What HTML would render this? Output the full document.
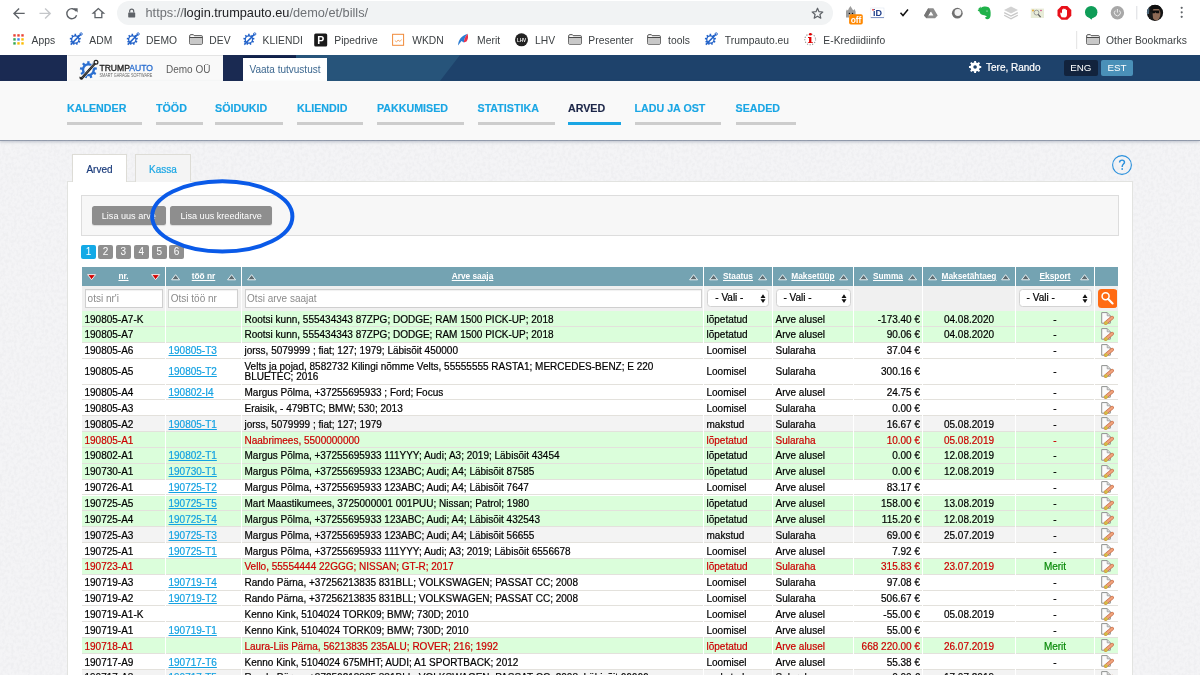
<!DOCTYPE html>
<html><head><meta charset="utf-8">
<style>
*{box-sizing:border-box;margin:0;padding:0}
html,body{width:1200px;height:675px;overflow:hidden}
body{font-family:"Liberation Sans",sans-serif;background:#f4f4f6;position:relative;color:#000}
.abs{position:absolute}
#root{position:absolute;left:0;top:0;width:1200px;height:675px;will-change:transform}
.c,.sel,.tab,#tere{-webkit-text-stroke:0.2px currentColor}
.ni{-webkit-text-stroke:0.15px currentColor}
/* browser chrome */
#chrome{position:absolute;left:0;top:0;width:1200px;height:55px;background:#fff}
#url{position:absolute;left:117px;top:1px;width:716px;height:23.5px;border-radius:12px;background:#f1f3f4}
#url .t{position:absolute;left:28.5px;top:3.6px;font-size:12.75px;color:#6e7175;white-space:nowrap}
#url .t b{font-weight:normal;color:#202124}
.bm{position:absolute;top:34.6px;font-size:10.3px;letter-spacing:0.05px;color:#3c4043;white-space:nowrap}
/* app header */
#hdr{position:absolute;left:0;top:55px;width:1200px;height:26px;background:#1e426b}
#navy1{position:absolute;left:0;top:0;width:67px;height:26px;background:#1a2a52}
#logoarea{position:absolute;left:67px;top:0;width:156px;height:26px;background:#f9f9f9;border-top:1px solid #e4e4e4;border-left:1px solid #fff}
#navy2{position:absolute;left:223px;top:0;width:73px;height:26px;background:#1a2a52}
#vaata{position:absolute;left:243px;top:3px;width:84px;height:23px;background:#fff;font-size:10px;color:#3d6890;padding:6px 0 0 6.5px;white-space:nowrap}
#demo{position:absolute;left:166px;top:9.2px;font-size:10px;color:#5c5c5c;white-space:nowrap}
#tere{position:absolute;left:986px;top:6.7px;font-size:10px;color:#fff;white-space:nowrap}
#eng{position:absolute;left:1063.5px;top:4.8px;width:34.5px;height:16.2px;background:#12233d;border-radius:2px;color:#fff;font-size:9.8px;text-align:center;line-height:15px}
#est{position:absolute;left:1101px;top:4.8px;width:32px;height:16.2px;background:#4a90b8;border-radius:2px;color:#fff;font-size:9.8px;text-align:center;line-height:15px}
/* nav */
#nav{position:absolute;left:0;top:81px;width:1200px;height:59px;background:#f9f9f9;box-shadow:0 1px 0 #9099aa,0 2px 3px rgba(120,130,150,.45)}
.ni{position:absolute;top:21px;font-size:10.7px;font-weight:bold;color:#1aa6e4;white-space:nowrap;padding-bottom:8px;border-bottom:3px solid #cdcdcd;padding-right:16px}
.ni.act{color:#1c2648;border-bottom-color:#1aa6e4}
/* tabs + panel */
#panel{position:absolute;left:67px;top:181px;width:1066px;height:520px;background:#fff;border:1px solid #e2e3e0}
.tab{position:absolute;top:154px;height:28px;border:1px solid #dddcd6;border-bottom:none;font-size:10px;text-align:center;padding-top:9px}
#tab1{left:72px;width:55px;background:#fff;color:#1b3c7c;height:28px}
#tab2{left:135px;width:56px;background:#f4f4f4;color:#1aa6e4}
#tb{position:absolute;left:81px;top:195px;width:1038px;height:41px;background:#f7f7f7;border:1px solid #dddddd}
.btn{position:absolute;top:206px;height:19px;background:#8e8e8e;border-radius:2.5px;color:#fff;font-size:9.1px;text-align:center;line-height:21.6px;white-space:nowrap;box-shadow:0 1px 1px rgba(0,0,0,.12)}
.pg{position:absolute;top:244.8px;width:14.6px;height:14px;border-radius:2px;background:#8f8f8f;color:#fff;font-size:10px;text-align:center;line-height:14px}
/* table */
#tbl{position:absolute;left:82px;top:267px;width:1036px;height:420px}
.hd{position:absolute;top:0;height:19px;background:#74a3b2}
.hd span{position:absolute;top:4px;left:0;right:0;text-align:center;font-size:8.3px;font-weight:bold;color:#fff;text-decoration:underline}
.tri{position:absolute;top:6.6px}
.fr{position:absolute;top:19px;height:24.6px;background:#f0f0f0}
.inp{position:absolute;top:3px;height:19px;background:#fff;border:1px solid #cfcfcf;font-size:10px;color:#8a8a8a;padding:3px 0 0 1.6px;white-space:nowrap;box-shadow:inset 0 1px 1px rgba(0,0,0,.06)}
.sel{position:absolute;top:3px;height:18.4px;background:#fff;border:1px solid #d3d3d3;border-radius:3.5px;font-size:10px;color:#000;padding:1.8px 0 0 7px;white-space:nowrap}
.row{position:absolute;left:0;width:1036px}
.c{position:absolute;top:0;bottom:0;background:var(--bg);border-bottom:1px solid #e3e1dc;font-size:10px;line-height:10px;padding:0 0 0 2.5px;white-space:nowrap;overflow:hidden;display:flex;align-items:center}
.c>*{position:relative;top:1.1px}
.c.r{justify-content:flex-end;padding-right:2px}
.c.ctr{justify-content:center;padding-left:0}
.row.red .c{color:#cc0000}
.row .c.merit{color:#0a8a0a}
.c a{color:#14a2e2;text-decoration:underline}
.edit{position:relative;left:-2.5px}
.c.ed>svg{top:-0.3px}
</style></head><body>
<div id="root">

<div id="chrome">
  <div id="url"><div class="t">https://<b>login.trumpauto.eu</b>/demo/et/bills/</div></div>
  <div class="bm" style="left:31.5px">Apps</div>
  <div class="bm" style="left:89.3px">ADM</div>
  <div class="bm" style="left:146px">DEMO</div>
  <div class="bm" style="left:209.3px">DEV</div>
  <div class="bm" style="left:262.5px">KLIENDI</div>
  <div class="bm" style="left:334.3px">Pipedrive</div>
  <div class="bm" style="left:412.2px">WKDN</div>
  <div class="bm" style="left:477px">Merit</div>
  <div class="bm" style="left:535px">LHV</div>
  <div class="bm" style="left:588.3px">Presenter</div>
  <div class="bm" style="left:668px">tools</div>
  <div class="bm" style="left:724.8px">Trumpauto.eu</div>
  <div class="bm" style="left:823.3px">E-Krediidiinfo</div>
  <div class="bm" style="left:1106px">Other Bookmarks</div>
<svg class="abs" style="left:0;top:0" width="1200" height="55" viewBox="0 0 1200 55">
  <!-- back -->
  <g fill="none" stroke="#5f6368" stroke-width="1.4" stroke-linecap="square">
    <path d="M24 13.4H14.2M18.6 8.9L14 13.4L18.6 17.9"/>
  </g>
  <g fill="none" stroke="#c4c6c9" stroke-width="1.4" stroke-linecap="square">
    <path d="M40.2 13.4H50M45.6 8.9L50.2 13.4L45.6 17.9"/>
  </g>
  <!-- reload -->
  <g fill="none" stroke="#5f6368" stroke-width="1.4">
    <path d="M76.2 11.2A5 5 0 1 0 76.6 15.2"/>
  </g>
  <path d="M73.2 8.3L77.6 8.3L77.6 12.6Z" fill="#5f6368"/>
  <!-- home -->
  <path d="M98.4 8.6L93.2 13.2H95V17.6H101.8V13.2H103.6Z" fill="none" stroke="#5f6368" stroke-width="1.3" stroke-linejoin="miter"/>
  <!-- lock -->
  <rect x="128.2" y="12.4" width="7" height="5" rx="0.6" fill="#5f6368"/>
  <path d="M129.7 12.6V11.2A2 2 0 0 1 133.7 11.2V12.6" fill="none" stroke="#5f6368" stroke-width="1.2"/>
  <!-- star -->
  <path d="M817.5 8.2L819 11.7L822.8 12L819.9 14.5L820.8 18.2L817.5 16.2L814.2 18.2L815.1 14.5L812.2 12L816 11.7Z" fill="none" stroke="#5f6368" stroke-width="1.2" stroke-linejoin="round"/>
  <!-- off ext -->
  <path d="M846 17.6V11.6L846.8 9.4L847.9 10.4L848.8 8.6L850.4 5.9L852 8.6L853.2 10.4L854.6 9L855.6 11.8V15H849V17.6Z" fill="#9d9d9d"/>
  <circle cx="849.4" cy="13.4" r="0.7" fill="#111"/><circle cx="852.5" cy="13.4" r="0.7" fill="#111"/>
  <rect x="849.1" y="14.3" width="13.7" height="10.3" rx="1.8" fill="#ff8800"/>
  <text x="856" y="22.6" font-size="8.4" font-family="Liberation Sans" font-weight="bold" fill="#fff" text-anchor="middle">off</text>
  <!-- iD -->
  <rect x="870.8" y="8" width="13.2" height="9.5" fill="#fff" stroke="#dfe6f0" stroke-width="0.6"/>
  <text x="877.4" y="16.2" font-size="9" font-family="Liberation Sans" font-weight="bold" fill="#1e3d8a" text-anchor="middle">iD</text>
  <rect x="872.3" y="9" width="1.4" height="1.6" fill="#e02020"/>
  <line x1="870.8" y1="17.6" x2="884" y2="17.6" stroke="#2d4d9a" stroke-width="0.6"/>
  <!-- check -->
  <path d="M900.5 12.8L903 15.6L908 9.6" fill="none" stroke="#111" stroke-width="1.5"/>
  <!-- drive -->
  <path d="M928.2 8.2H933.4L937.7 15.6L935.1 18.3H926.5L924 15.6Z" fill="#8d8d8d"/>
  <path d="M930.8 11.2L933.4 15.6H928.2Z" fill="#fff"/>
  <path d="M928.2 8.2L924 15.6L926.5 18.3L930.8 11.2Z" fill="#767676"/>
  <!-- circle -->
  <circle cx="957.3" cy="13.2" r="5.4" fill="#6f6f6f"/>
  <circle cx="957.9" cy="12.5" r="3.4" fill="#f2f2f2"/>
  <!-- evernote -->
  <path d="M981.5 7.6C983 6.4 986.5 6.3 988.6 7.3C990.4 8.6 990.9 12 990.6 15.2C990.4 17.8 989.2 19.2 987.2 19.2C985.6 19.2 985 18.2 985.3 17.3C985.6 16.6 986.6 16.6 987.2 17C986.6 15.8 984.8 15.4 983 15C980.8 14.4 979.8 13 979.4 11.4L977.6 10.8L979.6 8.8Z" fill="#20b24a"/>
  <path d="M977.7 9.4L980.6 9.3L980.8 6.6Z" fill="#20b24a"/>
  <circle cx="987" cy="11" r="0.6" fill="#fff"/>
  <!-- layers -->
  <path d="M1011 6.5L1018 10L1011 13.5L1004 10Z" fill="#d2d2d2"/>
  <path d="M1004.2 12.6L1011 16L1017.8 12.6M1004.2 15.2L1011 18.8L1017.8 15.2" fill="none" stroke="#c8c8c8" stroke-width="1.3"/>
  <!-- map -->
  <rect x="1030.8" y="8.6" width="13.2" height="9.4" fill="#e8ecd8"/>
  <circle cx="1036.5" cy="12.6" r="2.4" fill="none" stroke="#999" stroke-width="0.9"/>
  <path d="M1038.2 14.4L1040.6 17.2" stroke="#555" stroke-width="1.2"/>
  <circle cx="1033" cy="10.5" r="0.9" fill="#e6a020"/>
  <circle cx="1041" cy="10.5" r="0.8" fill="#d04080"/>
  <!-- red hand -->
  <path d="M1061.5 6H1067.3L1071.3 10V15.7L1067.3 19.7H1061.5L1057.5 15.7V10Z" fill="#e8101a"/>
  <path d="M1061.6 17.2C1060.5 15.5 1060 13.5 1060.5 12.8C1061 12.3 1061.5 12.8 1062 13.6V9.8C1062 9 1063.2 9 1063.2 9.8V12V9C1063.2 8.2 1064.5 8.2 1064.5 9V12V9.3C1064.5 8.5 1065.8 8.5 1065.8 9.3V12.2V10.2C1065.8 9.5 1067 9.5 1067 10.2V14.5C1067 16.5 1066 17.5 1065 17.5Z" fill="#fff"/>
  <!-- green chat -->
  <circle cx="1091.2" cy="12.2" r="6.2" fill="#0f9d58"/>
  <path d="M1089 17.5L1091.5 19.8L1092.5 17.5Z" fill="#0f9d58"/>
  <!-- power -->
  <circle cx="1117.4" cy="12.8" r="6.7" fill="#a8a8a8"/>
  <path d="M1115.3 10.6A3 3 0 1 0 1119.5 10.6" fill="none" stroke="#eee" stroke-width="1"/>
  <line x1="1117.4" y1="9" x2="1117.4" y2="12.6" stroke="#eee" stroke-width="1"/>
  <!-- separator -->
  <line x1="1136.8" y1="6" x2="1136.8" y2="19.5" stroke="#dadce0" stroke-width="1"/>
  <!-- avatar -->
  <clipPath id="avc"><circle cx="1155" cy="12.8" r="8.1"/></clipPath>
  <g clip-path="url(#avc)">
    <rect x="1146" y="4" width="18" height="18" fill="#141414"/>
    <rect x="1146" y="6" width="3.2" height="8" fill="#4a6478"/>
    <ellipse cx="1156.2" cy="14" rx="4.2" ry="6.4" fill="#8e6a55"/>
    <path d="M1151.5 10.6H1159.2V13.2H1156.5L1155.6 12.2L1154.6 13.2H1151.5Z" fill="#0c0c0c"/>
    <path d="M1149 12L1152.6 11.4L1152.8 20L1149 19Z" fill="#1a1a1a"/>
    <path d="M1151 5.6C1153 4.6 1157.5 4.6 1160 6.4L1159.6 9H1151.6Z" fill="#101010"/>
  </g>
  <!-- dots -->
  <circle cx="1181.7" cy="7.8" r="1.1" fill="#5f6368"/>
  <circle cx="1181.7" cy="12.3" r="1.1" fill="#5f6368"/>
  <circle cx="1181.7" cy="16.8" r="1.1" fill="#5f6368"/>

  <!-- bookmarks icons -->
  <g>
    <rect x="13.3" y="34.2" width="2.4" height="2.4" fill="#ea4335"/><rect x="17.3" y="34.2" width="2.4" height="2.4" fill="#ea4335"/><rect x="21.3" y="34.2" width="2.4" height="2.4" fill="#ea4335"/>
    <rect x="13.3" y="38.2" width="2.4" height="2.4" fill="#34a853"/><rect x="17.3" y="38.2" width="2.4" height="2.4" fill="#4285f4"/><rect x="21.3" y="38.2" width="2.4" height="2.4" fill="#fbbc05"/>
    <rect x="13.3" y="42.2" width="2.4" height="2.4" fill="#34a853"/><rect x="17.3" y="42.2" width="2.4" height="2.4" fill="#fbbc05"/><rect x="21.3" y="42.2" width="2.4" height="2.4" fill="#fbbc05"/>
  </g>
  <path d="M74.55 35.17 L74.52 33.85 L76.08 33.85 L76.05 35.17 L77.45 35.68 L78.27 34.65 L79.46 35.65 L78.59 36.64 L79.34 37.93 L80.63 37.67 L80.90 39.20 L79.60 39.40 L79.34 40.87 L80.49 41.50 L79.71 42.85 L78.59 42.16 L77.45 43.12 L77.93 44.34 L76.46 44.88 L76.05 43.63 L74.55 43.63 L74.14 44.88 L72.67 44.34 L73.15 43.12 L72.01 42.16 L70.89 42.85 L70.11 41.50 L71.26 40.87 L71.00 39.40 L69.70 39.20 L69.97 37.67 L71.26 37.93 L72.01 36.64 L71.14 35.65 L72.33 34.65 L73.15 35.68Z M78.30 39.4A3 3 0 1 0 72.30 39.4A3 3 0 1 0 78.30 39.4Z" fill="#2262c9" fill-rule="evenodd"/>
  <path d="M70.70 44.6L80.90 34.2" stroke="#2262c9" stroke-width="1.5"/><circle cx="81.10" cy="34" r="1.2" fill="none" stroke="#2262c9" stroke-width="0.9"/>
  <path d="M131.55 35.17 L131.52 33.85 L133.08 33.85 L133.05 35.17 L134.45 35.68 L135.27 34.65 L136.46 35.65 L135.59 36.64 L136.34 37.93 L137.63 37.67 L137.90 39.20 L136.60 39.40 L136.34 40.87 L137.49 41.50 L136.71 42.85 L135.59 42.16 L134.45 43.12 L134.93 44.34 L133.46 44.88 L133.05 43.63 L131.55 43.63 L131.14 44.88 L129.67 44.34 L130.15 43.12 L129.01 42.16 L127.89 42.85 L127.11 41.50 L128.26 40.87 L128.00 39.40 L126.70 39.20 L126.97 37.67 L128.26 37.93 L129.01 36.64 L128.14 35.65 L129.33 34.65 L130.15 35.68Z M135.30 39.4A3 3 0 1 0 129.30 39.4A3 3 0 1 0 135.30 39.4Z" fill="#2262c9" fill-rule="evenodd"/>
  <path d="M127.70 44.6L137.90 34.2" stroke="#2262c9" stroke-width="1.5"/><circle cx="138.10" cy="34" r="1.2" fill="none" stroke="#2262c9" stroke-width="0.9"/>
  <path d="M248.15 35.17 L248.12 33.85 L249.68 33.85 L249.65 35.17 L251.05 35.68 L251.87 34.65 L253.06 35.65 L252.19 36.64 L252.94 37.93 L254.23 37.67 L254.50 39.20 L253.20 39.40 L252.94 40.87 L254.09 41.50 L253.31 42.85 L252.19 42.16 L251.05 43.12 L251.53 44.34 L250.06 44.88 L249.65 43.63 L248.15 43.63 L247.74 44.88 L246.27 44.34 L246.75 43.12 L245.61 42.16 L244.49 42.85 L243.71 41.50 L244.86 40.87 L244.60 39.40 L243.30 39.20 L243.57 37.67 L244.86 37.93 L245.61 36.64 L244.74 35.65 L245.93 34.65 L246.75 35.68Z M251.90 39.4A3 3 0 1 0 245.90 39.4A3 3 0 1 0 251.90 39.4Z" fill="#2262c9" fill-rule="evenodd"/>
  <path d="M244.30 44.6L254.50 34.2" stroke="#2262c9" stroke-width="1.5"/><circle cx="254.70" cy="34" r="1.2" fill="none" stroke="#2262c9" stroke-width="0.9"/>
  <path d="M709.65 35.17 L709.62 33.85 L711.18 33.85 L711.15 35.17 L712.55 35.68 L713.37 34.65 L714.56 35.65 L713.69 36.64 L714.44 37.93 L715.73 37.67 L716.00 39.20 L714.70 39.40 L714.44 40.87 L715.59 41.50 L714.81 42.85 L713.69 42.16 L712.55 43.12 L713.03 44.34 L711.56 44.88 L711.15 43.63 L709.65 43.63 L709.24 44.88 L707.77 44.34 L708.25 43.12 L707.11 42.16 L705.99 42.85 L705.21 41.50 L706.36 40.87 L706.10 39.40 L704.80 39.20 L705.07 37.67 L706.36 37.93 L707.11 36.64 L706.24 35.65 L707.43 34.65 L708.25 35.68Z M713.40 39.4A3 3 0 1 0 707.40 39.4A3 3 0 1 0 713.40 39.4Z" fill="#2262c9" fill-rule="evenodd"/>
  <path d="M705.80 44.6L716.00 34.2" stroke="#2262c9" stroke-width="1.5"/><circle cx="716.20" cy="34" r="1.2" fill="none" stroke="#2262c9" stroke-width="0.9"/>
  <!-- folders -->
  <g transform="translate(189.2,34.2)"><path d="M0.5 8V1.6Q0.5 0.5 1.6 0.5H4.2L5 1.5H12.5Q13.1 1.5 13.1 2.2V9.4Q13.1 10 12.5 10H1.2Q0.5 10 0.5 9.3Z" fill="#fff" stroke="#4a4a4a" stroke-width="1"/><rect x="1" y="3.6" width="11.6" height="6" fill="#c8c8c8"/><path d="M0.5 3.3H13.1" stroke="#4a4a4a" stroke-width="1"/></g>
  <g transform="translate(568.2,34.2)"><path d="M0.5 8V1.6Q0.5 0.5 1.6 0.5H4.2L5 1.5H12.5Q13.1 1.5 13.1 2.2V9.4Q13.1 10 12.5 10H1.2Q0.5 10 0.5 9.3Z" fill="#fff" stroke="#4a4a4a" stroke-width="1"/><rect x="1" y="3.6" width="11.6" height="6" fill="#c8c8c8"/><path d="M0.5 3.3H13.1" stroke="#4a4a4a" stroke-width="1"/></g>
  <g transform="translate(647.2,34.2)"><path d="M0.5 8V1.6Q0.5 0.5 1.6 0.5H4.2L5 1.5H12.5Q13.1 1.5 13.1 2.2V9.4Q13.1 10 12.5 10H1.2Q0.5 10 0.5 9.3Z" fill="#fff" stroke="#4a4a4a" stroke-width="1"/><rect x="1" y="3.6" width="11.6" height="6" fill="#c8c8c8"/><path d="M0.5 3.3H13.1" stroke="#4a4a4a" stroke-width="1"/></g>
  <g transform="translate(1086.2,34.2)"><path d="M0.5 8V1.6Q0.5 0.5 1.6 0.5H4.2L5 1.5H12.5Q13.1 1.5 13.1 2.2V9.4Q13.1 10 12.5 10H1.2Q0.5 10 0.5 9.3Z" fill="#fff" stroke="#4a4a4a" stroke-width="1"/><rect x="1" y="3.6" width="11.6" height="6" fill="#c8c8c8"/><path d="M0.5 3.3H13.1" stroke="#4a4a4a" stroke-width="1"/></g>
  <!-- pipedrive -->
  <rect x="314.2" y="33.5" width="13" height="13" rx="1.5" fill="#1a1a1a"/>
  <text x="320.7" y="44.2" font-size="10.5" font-family="Liberation Sans" font-weight="bold" fill="#fff" text-anchor="middle">P</text>
  <!-- wkdn -->
  <rect x="392.6" y="34.3" width="11" height="11" fill="#fff" stroke="#f08a3a" stroke-width="1"/>
  <path d="M394.8 40.5L396.5 42L398 40L400 41.5L401.5 39.5" fill="none" stroke="#f08a3a" stroke-width="0.7"/>
  <!-- merit -->
  <path d="M458 45.5C458.5 40 461 36 467.5 33.8C465 37 464 40 463.8 42.5L461.5 41Z" fill="#2b7cd3"/>
  <path d="M463.8 42.5C464 40 465 37 467.5 33.8C468.6 36.5 468 39.5 466.5 41.6Z" fill="#e8304a"/>
  <!-- LHV -->
  <circle cx="521.5" cy="39.8" r="6.5" fill="#222"/>
  <text x="521.5" y="41.6" font-size="4.6" font-family="Liberation Sans" font-weight="bold" fill="#eee" text-anchor="middle">LHV</text>
  <!-- E-krediidiinfo -->
  <circle cx="810.2" cy="39.4" r="5.4" fill="none" stroke="#8a8a8a" stroke-width="1.1" stroke-dasharray="1.1 1.5"/>
  <rect x="808.4" y="32.6" width="3.6" height="3.4" fill="#fff"/>
  <ellipse cx="810.4" cy="34.3" rx="1.5" ry="1.3" fill="#e00000"/>
  <path d="M808 37H811.4V42.3H812.9V43.1H807.9V42.3H809.1V37.9H808Z" fill="#e00000"/>
  <line x1="1076.7" y1="31" x2="1076.7" y2="49" stroke="#e2e2e2" stroke-width="1"/>
</svg>

</div>

<div id="hdr">
  <div id="navy1"></div>
  <div id="logoarea"></div>
  <div id="navy2"></div>
<svg class="abs" style="left:0;top:-55px" width="1200" height="81" viewBox="0 0 1200 81">
  <path d="M296 55H460L440 81H296Z" fill="#27547a"/>
  <rect x="243" y="56.4" width="53" height="1.6" fill="#0e2048"/>
  <path d="M974.18 62.39 L974.13 60.88 L976.07 60.88 L976.02 62.39 L977.71 63.09 L978.74 61.98 L980.12 63.36 L979.01 64.39 L979.71 66.08 L981.22 66.03 L981.22 67.97 L979.71 67.92 L979.01 69.61 L980.12 70.64 L978.74 72.02 L977.71 70.91 L976.02 71.61 L976.07 73.12 L974.13 73.12 L974.18 71.61 L972.49 70.91 L971.46 72.02 L970.08 70.64 L971.19 69.61 L970.49 67.92 L968.98 67.97 L968.98 66.03 L970.49 66.08 L971.19 64.39 L970.08 63.36 L971.46 61.98 L972.49 63.09Z M976.9 67A1.8 1.8 0 1 0 973.3 67A1.8 1.8 0 1 0 976.9 67Z" fill="#fff" fill-rule="evenodd"/>
  <path d="M87.25 63.30 L87.20 61.28 L89.60 61.28 L89.55 63.30 L91.70 64.08 L92.96 62.51 L94.79 64.05 L93.46 65.56 L94.60 67.54 L96.58 67.14 L96.99 69.50 L95.00 69.80 L94.60 72.06 L96.37 73.02 L95.18 75.09 L93.46 74.04 L91.70 75.52 L92.44 77.39 L90.19 78.21 L89.55 76.30 L87.25 76.30 L86.61 78.21 L84.36 77.39 L85.10 75.52 L83.34 74.04 L81.62 75.09 L80.43 73.02 L82.20 72.06 L81.80 69.80 L79.81 69.50 L80.22 67.14 L82.20 67.54 L83.34 65.56 L82.01 64.05 L83.84 62.51 L85.10 64.08Z M92.6 69.8A4.2 4.2 0 1 0 84.2 69.8A4.2 4.2 0 1 0 92.6 69.8Z" fill="#2b6fd0" fill-rule="evenodd"/>
  <path d="M81.5 78.6L95.2 63.2" stroke="#fff" stroke-width="3.6"/>
  <path d="M81.5 78.6L95.2 63.2" stroke="#222" stroke-width="2.4"/>
  <path d="M81.2 78.8L95.5 62.8" stroke="#fff" stroke-width="0.5" stroke-dasharray="0.8 0.8"/>
  <circle cx="96" cy="62.3" r="1.9" fill="none" stroke="#222" stroke-width="1.2"/>
  <path d="M79.6 76.5C79 78.5 80 80 82 79.8L82.8 78.4L81.4 77.6Z" fill="#222"/>
  <text x="99.4" y="70.8" font-size="8.4" font-family="Liberation Sans" textLength="53.6" lengthAdjust="spacingAndGlyphs" fill="#222" stroke="currentColor" stroke-width="0.3"><tspan stroke="#222">TRUMP</tspan><tspan fill="#2b6fd0" stroke="#2b6fd0">AUTO</tspan></text>
  <text x="99.6" y="77" font-size="4.8" font-family="Liberation Sans" textLength="52.6" lengthAdjust="spacingAndGlyphs" fill="#666">SMART GARAGE SOFTWARE</text>
</svg>
  <div id="vaata">Vaata tutvustust</div>
  <div id="demo">Demo OÜ</div>
  <div id="tere">Tere, Rando</div>
  <div id="eng">ENG</div>
  <div id="est">EST</div>
</div>

<div id="nav">
  <div class="ni" style="left:67px">KALENDER</div>
  <div class="ni" style="left:156px">TÖÖD</div>
  <div class="ni" style="left:215px">SÖIDUKID</div>
  <div class="ni" style="left:297px">KLIENDID</div>
  <div class="ni" style="left:377px">PAKKUMISED</div>
  <div class="ni" style="left:477.5px">STATISTIKA</div>
  <div class="ni act" style="left:568px">ARVED</div>
  <div class="ni" style="left:634.5px">LADU JA OST</div>
  <div class="ni" style="left:735.5px">SEADED</div>
</div>

<svg class="abs" style="left:0;top:140px" width="1200" height="535" viewBox="0 0 1200 535">
  <filter id="paper" x="0" y="0" width="100%" height="100%">
    <feTurbulence type="fractalNoise" baseFrequency="0.35 0.3" numOctaves="2" seed="7" result="n"/>
    <feColorMatrix in="n" type="matrix" values="0 0 0 0 0.55  0 0 0 0 0.56  0 0 0 0 0.6  0 0 0 -2.2 1.35"/>
  </filter>
  <rect width="1200" height="535" filter="url(#paper)" opacity="0.12"/>
</svg>
<div id="panel"></div>
<div class="tab" id="tab1">Arved</div>
<div class="tab" id="tab2">Kassa</div>
<div id="tb"></div>
<svg class="abs" style="left:1111px;top:154px" width="22" height="22" viewBox="0 0 22 22"><circle cx="11" cy="11" r="9.4" fill="none" stroke="#2b90dc" stroke-width="1.1"/><path d="M8.6 8.6C8.6 6.9 9.7 6.1 11.1 6.1C12.5 6.1 13.5 7 13.5 8.3C13.5 10 11.2 10.3 11.2 12.4V13" fill="none" stroke="#2b90dc" stroke-width="1.4"/><rect x="10.4" y="14.2" width="1.6" height="1.6" fill="#2b90dc"/></svg>
<div class="btn" style="left:92px;width:73.7px">Lisa uus arve</div>
<div class="btn" style="left:170.3px;width:101.6px">Lisa uus kreeditarve</div>

<div class="pg" style="left:81.2px;background:#13a9e6">1</div>
<div class="pg" style="left:98.2px">2</div>
<div class="pg" style="left:116px">3</div>
<div class="pg" style="left:134px">4</div>
<div class="pg" style="left:152px">5</div>
<div class="pg" style="left:169.2px">6</div>

<div id="tbl">
  <div class="hd" style="left:0;width:83px"><svg class="tri" width="10" height="7" viewBox="0 0 10 7" style="left:4.8px"><path d="M0.6 0.6H8.6L4.6 5.7Z" fill="#d20000" stroke="#f4eaea" stroke-width="1"/></svg><span>nr.</span><svg class="tri" width="10" height="7" viewBox="0 0 10 7" style="right:4.1px"><path d="M0.6 0.6H8.6L4.6 5.7Z" fill="#d20000" stroke="#f4eaea" stroke-width="1"/></svg></div>
  <div class="hd" style="left:84px;width:75px"><svg class="tri" width="10" height="7" viewBox="0 0 10 7" style="left:4.8px"><path d="M4.6 0.7L8.6 5.8H0.6Z" fill="#5f6b70" stroke="#e6eff1" stroke-width="1" stroke-linejoin="miter"/></svg><span>töö nr</span><svg class="tri" width="10" height="7" viewBox="0 0 10 7" style="right:4.1px"><path d="M4.6 0.7L8.6 5.8H0.6Z" fill="#5f6b70" stroke="#e6eff1" stroke-width="1" stroke-linejoin="miter"/></svg></div>
  <div class="hd" style="left:160px;width:461px"><svg class="tri" width="10" height="7" viewBox="0 0 10 7" style="left:4.8px"><path d="M4.6 0.7L8.6 5.8H0.6Z" fill="#5f6b70" stroke="#e6eff1" stroke-width="1" stroke-linejoin="miter"/></svg><span>Arve saaja</span><svg class="tri" width="10" height="7" viewBox="0 0 10 7" style="right:4.1px"><path d="M4.6 0.7L8.6 5.8H0.6Z" fill="#5f6b70" stroke="#e6eff1" stroke-width="1" stroke-linejoin="miter"/></svg></div>
  <div class="hd" style="left:622px;width:68px"><svg class="tri" width="10" height="7" viewBox="0 0 10 7" style="left:4.8px"><path d="M4.6 0.7L8.6 5.8H0.6Z" fill="#5f6b70" stroke="#e6eff1" stroke-width="1" stroke-linejoin="miter"/></svg><span>Staatus</span><svg class="tri" width="10" height="7" viewBox="0 0 10 7" style="right:4.1px"><path d="M4.6 0.7L8.6 5.8H0.6Z" fill="#5f6b70" stroke="#e6eff1" stroke-width="1" stroke-linejoin="miter"/></svg></div>
  <div class="hd" style="left:691px;width:80px"><svg class="tri" width="10" height="7" viewBox="0 0 10 7" style="left:4.8px"><path d="M4.6 0.7L8.6 5.8H0.6Z" fill="#5f6b70" stroke="#e6eff1" stroke-width="1" stroke-linejoin="miter"/></svg><span>Maksetüüp</span><svg class="tri" width="10" height="7" viewBox="0 0 10 7" style="right:4.1px"><path d="M4.6 0.7L8.6 5.8H0.6Z" fill="#5f6b70" stroke="#e6eff1" stroke-width="1" stroke-linejoin="miter"/></svg></div>
  <div class="hd" style="left:772px;width:68px"><svg class="tri" width="10" height="7" viewBox="0 0 10 7" style="left:4.8px"><path d="M4.6 0.7L8.6 5.8H0.6Z" fill="#5f6b70" stroke="#e6eff1" stroke-width="1" stroke-linejoin="miter"/></svg><span>Summa</span><svg class="tri" width="10" height="7" viewBox="0 0 10 7" style="right:4.1px"><path d="M4.6 0.7L8.6 5.8H0.6Z" fill="#5f6b70" stroke="#e6eff1" stroke-width="1" stroke-linejoin="miter"/></svg></div>
  <div class="hd" style="left:841px;width:92px"><svg class="tri" width="10" height="7" viewBox="0 0 10 7" style="left:4.8px"><path d="M4.6 0.7L8.6 5.8H0.6Z" fill="#5f6b70" stroke="#e6eff1" stroke-width="1" stroke-linejoin="miter"/></svg><span>Maksetähtaeg</span><svg class="tri" width="10" height="7" viewBox="0 0 10 7" style="right:4.1px"><path d="M4.6 0.7L8.6 5.8H0.6Z" fill="#5f6b70" stroke="#e6eff1" stroke-width="1" stroke-linejoin="miter"/></svg></div>
  <div class="hd" style="left:934px;width:78px"><svg class="tri" width="10" height="7" viewBox="0 0 10 7" style="left:4.8px"><path d="M4.6 0.7L8.6 5.8H0.6Z" fill="#5f6b70" stroke="#e6eff1" stroke-width="1" stroke-linejoin="miter"/></svg><span>Eksport</span><svg class="tri" width="10" height="7" viewBox="0 0 10 7" style="right:4.1px"><path d="M4.6 0.7L8.6 5.8H0.6Z" fill="#5f6b70" stroke="#e6eff1" stroke-width="1" stroke-linejoin="miter"/></svg></div>
  <div class="hd" style="left:1013px;width:23px"></div>

  <div class="fr" style="left:0;width:83px"><div class="inp" style="left:3px;width:78px">otsi nr'i</div></div>
  <div class="fr" style="left:84px;width:75px"><div class="inp" style="left:2.2px;width:69.7px">Otsi töö nr</div></div>
  <div class="fr" style="left:160px;width:461px"><div class="inp" style="left:2.5px;width:457px">Otsi arve saajat</div></div>
  <div class="fr" style="left:622px;width:68px"><div class="sel" style="left:3.3px;width:61.8px">- Vali -<svg style="position:absolute;right:2.6px;top:3.7px" width="6" height="10" viewBox="0 0 6 10"><path d="M3 0.2L5.5 4H0.5Z M0.5 5.2H5.5L3 9Z" fill="#111"/></svg></div></div>
  <div class="fr" style="left:691px;width:80px"><div class="sel" style="left:2.5px;width:75px">- Vali -<svg style="position:absolute;right:2.6px;top:3.7px" width="6" height="10" viewBox="0 0 6 10"><path d="M3 0.2L5.5 4H0.5Z M0.5 5.2H5.5L3 9Z" fill="#111"/></svg></div></div>
  <div class="fr" style="left:772px;width:68px"></div>
  <div class="fr" style="left:841px;width:92px"></div>
  <div class="fr" style="left:934px;width:78px"><div class="sel" style="left:2.6px;width:73px">- Vali -<svg style="position:absolute;right:2.6px;top:3.7px" width="6" height="10" viewBox="0 0 6 10"><path d="M3 0.2L5.5 4H0.5Z M0.5 5.2H5.5L3 9Z" fill="#111"/></svg></div></div>
  <div class="fr" style="left:1013px;width:23px"><svg style="position:absolute;left:2.6px;top:3px" width="19.4" height="19" viewBox="0 0 19.4 19"><rect width="19.4" height="19" rx="3.6" fill="#ff6b14"/><circle cx="7.6" cy="7.2" r="3.5" fill="none" stroke="#fff" stroke-width="1.5"/><path d="M10.2 9.9L14.6 14.4" stroke="#fff" stroke-width="2.1" stroke-linecap="round"/></svg></div>

<div class="row" style="top:44.00px;height:15.85px;--bg:#dbfedb"><div class="c" style="left:0px;width:83px"><span>190805-A7-K</span></div><div class="c" style="left:84px;width:75px"></div><div class="c" style="left:160px;width:461px"><span>Rootsi kunn, 555434343 87ZPG; DODGE; RAM 1500 PICK-UP; 2018</span></div><div class="c" style="left:622px;width:68px"><span>lõpetatud</span></div><div class="c" style="left:691px;width:80px"><span>Arve alusel</span></div><div class="c r" style="left:772px;width:68px"><span>-173.40 €</span></div><div class="c ctr" style="left:841px;width:92px"><span>04.08.2020</span></div><div class="c ctr" style="left:934px;width:78px"><span>-</span></div><div class="c ed" style="left:1013px;width:23px"><svg class="edit" width="19" height="14" viewBox="0 0 19 14"><path d="M6.7 1.6H12.2L15.3 4.8V12.2H6.7Z" fill="#fbfbfb" stroke="#8f9290" stroke-width="1"/><path d="M12.2 1.6V4.8H15.3" fill="#d8d8d8" stroke="#9a9a9a" stroke-width="0.8"/><path d="M10.6 12.1L17.1 6.6" stroke="#c46a44" stroke-width="3.6" stroke-linecap="round"/><path d="M10.6 12.1L17.1 6.6" stroke="#f0a37c" stroke-width="2.4" stroke-linecap="round"/><circle cx="11" cy="12" r="1.7" fill="#d2c040"/></svg></div></div>
<div class="row" style="top:59.85px;height:15.85px;--bg:#dbfedb"><div class="c" style="left:0px;width:83px"><span>190805-A7</span></div><div class="c" style="left:84px;width:75px"></div><div class="c" style="left:160px;width:461px"><span>Rootsi kunn, 555434343 87ZPG; DODGE; RAM 1500 PICK-UP; 2018</span></div><div class="c" style="left:622px;width:68px"><span>lõpetatud</span></div><div class="c" style="left:691px;width:80px"><span>Arve alusel</span></div><div class="c r" style="left:772px;width:68px"><span>90.06 €</span></div><div class="c ctr" style="left:841px;width:92px"><span>04.08.2020</span></div><div class="c ctr" style="left:934px;width:78px"><span>-</span></div><div class="c ed" style="left:1013px;width:23px"><svg class="edit" width="19" height="14" viewBox="0 0 19 14"><path d="M6.7 1.6H12.2L15.3 4.8V12.2H6.7Z" fill="#fbfbfb" stroke="#8f9290" stroke-width="1"/><path d="M12.2 1.6V4.8H15.3" fill="#d8d8d8" stroke="#9a9a9a" stroke-width="0.8"/><path d="M10.6 12.1L17.1 6.6" stroke="#c46a44" stroke-width="3.6" stroke-linecap="round"/><path d="M10.6 12.1L17.1 6.6" stroke="#f0a37c" stroke-width="2.4" stroke-linecap="round"/><circle cx="11" cy="12" r="1.7" fill="#d2c040"/></svg></div></div>
<div class="row" style="top:75.70px;height:15.85px;--bg:#ffffff"><div class="c" style="left:0px;width:83px"><span>190805-A6</span></div><div class="c" style="left:84px;width:75px"><a>190805-T3</a></div><div class="c" style="left:160px;width:461px"><span>jorss, 5079999 ; fiat; 127; 1979; Läbisõit 450000</span></div><div class="c" style="left:622px;width:68px"><span>Loomisel</span></div><div class="c" style="left:691px;width:80px"><span>Sularaha</span></div><div class="c r" style="left:772px;width:68px"><span>37.04 €</span></div><div class="c ctr" style="left:841px;width:92px"><span></span></div><div class="c ctr" style="left:934px;width:78px"><span>-</span></div><div class="c ed" style="left:1013px;width:23px"><svg class="edit" width="19" height="14" viewBox="0 0 19 14"><path d="M6.7 1.6H12.2L15.3 4.8V12.2H6.7Z" fill="#fbfbfb" stroke="#8f9290" stroke-width="1"/><path d="M12.2 1.6V4.8H15.3" fill="#d8d8d8" stroke="#9a9a9a" stroke-width="0.8"/><path d="M10.6 12.1L17.1 6.6" stroke="#c46a44" stroke-width="3.6" stroke-linecap="round"/><path d="M10.6 12.1L17.1 6.6" stroke="#f0a37c" stroke-width="2.4" stroke-linecap="round"/><circle cx="11" cy="12" r="1.7" fill="#d2c040"/></svg></div></div>
<div class="row" style="top:91.55px;height:26.00px;--bg:#ffffff"><div class="c" style="left:0px;width:83px"><span>190805-A5</span></div><div class="c" style="left:84px;width:75px"><a>190805-T2</a></div><div class="c" style="left:160px;width:461px"><span>Velts ja pojad, 8582732 Kilingi nõmme Velts, 55555555 RASTA1; MERCEDES-BENZ; E 220<br>BLUETEC; 2016</span></div><div class="c" style="left:622px;width:68px"><span>Loomisel</span></div><div class="c" style="left:691px;width:80px"><span>Sularaha</span></div><div class="c r" style="left:772px;width:68px"><span>300.16 €</span></div><div class="c ctr" style="left:841px;width:92px"><span></span></div><div class="c ctr" style="left:934px;width:78px"><span>-</span></div><div class="c ed" style="left:1013px;width:23px"><svg class="edit" width="19" height="14" viewBox="0 0 19 14"><path d="M6.7 1.6H12.2L15.3 4.8V12.2H6.7Z" fill="#fbfbfb" stroke="#8f9290" stroke-width="1"/><path d="M12.2 1.6V4.8H15.3" fill="#d8d8d8" stroke="#9a9a9a" stroke-width="0.8"/><path d="M10.6 12.1L17.1 6.6" stroke="#c46a44" stroke-width="3.6" stroke-linecap="round"/><path d="M10.6 12.1L17.1 6.6" stroke="#f0a37c" stroke-width="2.4" stroke-linecap="round"/><circle cx="11" cy="12" r="1.7" fill="#d2c040"/></svg></div></div>
<div class="row" style="top:117.55px;height:15.85px;--bg:#ffffff"><div class="c" style="left:0px;width:83px"><span>190805-A4</span></div><div class="c" style="left:84px;width:75px"><a>190802-I4</a></div><div class="c" style="left:160px;width:461px"><span>Margus Põlma, +37255695933 ; Ford; Focus</span></div><div class="c" style="left:622px;width:68px"><span>Loomisel</span></div><div class="c" style="left:691px;width:80px"><span>Arve alusel</span></div><div class="c r" style="left:772px;width:68px"><span>24.75 €</span></div><div class="c ctr" style="left:841px;width:92px"><span></span></div><div class="c ctr" style="left:934px;width:78px"><span>-</span></div><div class="c ed" style="left:1013px;width:23px"><svg class="edit" width="19" height="14" viewBox="0 0 19 14"><path d="M6.7 1.6H12.2L15.3 4.8V12.2H6.7Z" fill="#fbfbfb" stroke="#8f9290" stroke-width="1"/><path d="M12.2 1.6V4.8H15.3" fill="#d8d8d8" stroke="#9a9a9a" stroke-width="0.8"/><path d="M10.6 12.1L17.1 6.6" stroke="#c46a44" stroke-width="3.6" stroke-linecap="round"/><path d="M10.6 12.1L17.1 6.6" stroke="#f0a37c" stroke-width="2.4" stroke-linecap="round"/><circle cx="11" cy="12" r="1.7" fill="#d2c040"/></svg></div></div>
<div class="row" style="top:133.40px;height:15.85px;--bg:#ffffff"><div class="c" style="left:0px;width:83px"><span>190805-A3</span></div><div class="c" style="left:84px;width:75px"></div><div class="c" style="left:160px;width:461px"><span>Eraisik, - 479BTC; BMW; 530; 2013</span></div><div class="c" style="left:622px;width:68px"><span>Loomisel</span></div><div class="c" style="left:691px;width:80px"><span>Sularaha</span></div><div class="c r" style="left:772px;width:68px"><span>0.00 €</span></div><div class="c ctr" style="left:841px;width:92px"><span></span></div><div class="c ctr" style="left:934px;width:78px"><span>-</span></div><div class="c ed" style="left:1013px;width:23px"><svg class="edit" width="19" height="14" viewBox="0 0 19 14"><path d="M6.7 1.6H12.2L15.3 4.8V12.2H6.7Z" fill="#fbfbfb" stroke="#8f9290" stroke-width="1"/><path d="M12.2 1.6V4.8H15.3" fill="#d8d8d8" stroke="#9a9a9a" stroke-width="0.8"/><path d="M10.6 12.1L17.1 6.6" stroke="#c46a44" stroke-width="3.6" stroke-linecap="round"/><path d="M10.6 12.1L17.1 6.6" stroke="#f0a37c" stroke-width="2.4" stroke-linecap="round"/><circle cx="11" cy="12" r="1.7" fill="#d2c040"/></svg></div></div>
<div class="row" style="top:149.25px;height:15.85px;--bg:#f3f3f3"><div class="c" style="left:0px;width:83px"><span>190805-A2</span></div><div class="c" style="left:84px;width:75px"><a>190805-T1</a></div><div class="c" style="left:160px;width:461px"><span>jorss, 5079999 ; fiat; 127; 1979</span></div><div class="c" style="left:622px;width:68px"><span>makstud</span></div><div class="c" style="left:691px;width:80px"><span>Sularaha</span></div><div class="c r" style="left:772px;width:68px"><span>16.67 €</span></div><div class="c ctr" style="left:841px;width:92px"><span>05.08.2019</span></div><div class="c ctr" style="left:934px;width:78px"><span>-</span></div><div class="c ed" style="left:1013px;width:23px"><svg class="edit" width="19" height="14" viewBox="0 0 19 14"><path d="M6.7 1.6H12.2L15.3 4.8V12.2H6.7Z" fill="#fbfbfb" stroke="#8f9290" stroke-width="1"/><path d="M12.2 1.6V4.8H15.3" fill="#d8d8d8" stroke="#9a9a9a" stroke-width="0.8"/><path d="M10.6 12.1L17.1 6.6" stroke="#c46a44" stroke-width="3.6" stroke-linecap="round"/><path d="M10.6 12.1L17.1 6.6" stroke="#f0a37c" stroke-width="2.4" stroke-linecap="round"/><circle cx="11" cy="12" r="1.7" fill="#d2c040"/></svg></div></div>
<div class="row red" style="top:165.10px;height:15.85px;--bg:#dbfedb"><div class="c" style="left:0px;width:83px"><span>190805-A1</span></div><div class="c" style="left:84px;width:75px"></div><div class="c" style="left:160px;width:461px"><span>Naabrimees, 5500000000</span></div><div class="c" style="left:622px;width:68px"><span>lõpetatud</span></div><div class="c" style="left:691px;width:80px"><span>Sularaha</span></div><div class="c r" style="left:772px;width:68px"><span>10.00 €</span></div><div class="c ctr" style="left:841px;width:92px"><span>05.08.2019</span></div><div class="c ctr" style="left:934px;width:78px"><span>-</span></div><div class="c ed" style="left:1013px;width:23px"><svg class="edit" width="19" height="14" viewBox="0 0 19 14"><path d="M6.7 1.6H12.2L15.3 4.8V12.2H6.7Z" fill="#fbfbfb" stroke="#8f9290" stroke-width="1"/><path d="M12.2 1.6V4.8H15.3" fill="#d8d8d8" stroke="#9a9a9a" stroke-width="0.8"/><path d="M10.6 12.1L17.1 6.6" stroke="#c46a44" stroke-width="3.6" stroke-linecap="round"/><path d="M10.6 12.1L17.1 6.6" stroke="#f0a37c" stroke-width="2.4" stroke-linecap="round"/><circle cx="11" cy="12" r="1.7" fill="#d2c040"/></svg></div></div>
<div class="row" style="top:180.95px;height:15.85px;--bg:#dbfedb"><div class="c" style="left:0px;width:83px"><span>190802-A1</span></div><div class="c" style="left:84px;width:75px"><a>190802-T1</a></div><div class="c" style="left:160px;width:461px"><span>Margus Põlma, +37255695933 111YYY; Audi; A3; 2019; Läbisõit 43454</span></div><div class="c" style="left:622px;width:68px"><span>lõpetatud</span></div><div class="c" style="left:691px;width:80px"><span>Arve alusel</span></div><div class="c r" style="left:772px;width:68px"><span>0.00 €</span></div><div class="c ctr" style="left:841px;width:92px"><span>12.08.2019</span></div><div class="c ctr" style="left:934px;width:78px"><span>-</span></div><div class="c ed" style="left:1013px;width:23px"><svg class="edit" width="19" height="14" viewBox="0 0 19 14"><path d="M6.7 1.6H12.2L15.3 4.8V12.2H6.7Z" fill="#fbfbfb" stroke="#8f9290" stroke-width="1"/><path d="M12.2 1.6V4.8H15.3" fill="#d8d8d8" stroke="#9a9a9a" stroke-width="0.8"/><path d="M10.6 12.1L17.1 6.6" stroke="#c46a44" stroke-width="3.6" stroke-linecap="round"/><path d="M10.6 12.1L17.1 6.6" stroke="#f0a37c" stroke-width="2.4" stroke-linecap="round"/><circle cx="11" cy="12" r="1.7" fill="#d2c040"/></svg></div></div>
<div class="row" style="top:196.80px;height:15.85px;--bg:#dbfedb"><div class="c" style="left:0px;width:83px"><span>190730-A1</span></div><div class="c" style="left:84px;width:75px"><a>190730-T1</a></div><div class="c" style="left:160px;width:461px"><span>Margus Põlma, +37255695933 123ABC; Audi; A4; Läbisõit 87585</span></div><div class="c" style="left:622px;width:68px"><span>lõpetatud</span></div><div class="c" style="left:691px;width:80px"><span>Arve alusel</span></div><div class="c r" style="left:772px;width:68px"><span>0.00 €</span></div><div class="c ctr" style="left:841px;width:92px"><span>12.08.2019</span></div><div class="c ctr" style="left:934px;width:78px"><span>-</span></div><div class="c ed" style="left:1013px;width:23px"><svg class="edit" width="19" height="14" viewBox="0 0 19 14"><path d="M6.7 1.6H12.2L15.3 4.8V12.2H6.7Z" fill="#fbfbfb" stroke="#8f9290" stroke-width="1"/><path d="M12.2 1.6V4.8H15.3" fill="#d8d8d8" stroke="#9a9a9a" stroke-width="0.8"/><path d="M10.6 12.1L17.1 6.6" stroke="#c46a44" stroke-width="3.6" stroke-linecap="round"/><path d="M10.6 12.1L17.1 6.6" stroke="#f0a37c" stroke-width="2.4" stroke-linecap="round"/><circle cx="11" cy="12" r="1.7" fill="#d2c040"/></svg></div></div>
<div class="row" style="top:212.65px;height:15.85px;--bg:#ffffff"><div class="c" style="left:0px;width:83px"><span>190726-A1</span></div><div class="c" style="left:84px;width:75px"><a>190725-T2</a></div><div class="c" style="left:160px;width:461px"><span>Margus Põlma, +37255695933 123ABC; Audi; A4; Läbisõit 7647</span></div><div class="c" style="left:622px;width:68px"><span>Loomisel</span></div><div class="c" style="left:691px;width:80px"><span>Arve alusel</span></div><div class="c r" style="left:772px;width:68px"><span>83.17 €</span></div><div class="c ctr" style="left:841px;width:92px"><span></span></div><div class="c ctr" style="left:934px;width:78px"><span>-</span></div><div class="c ed" style="left:1013px;width:23px"><svg class="edit" width="19" height="14" viewBox="0 0 19 14"><path d="M6.7 1.6H12.2L15.3 4.8V12.2H6.7Z" fill="#fbfbfb" stroke="#8f9290" stroke-width="1"/><path d="M12.2 1.6V4.8H15.3" fill="#d8d8d8" stroke="#9a9a9a" stroke-width="0.8"/><path d="M10.6 12.1L17.1 6.6" stroke="#c46a44" stroke-width="3.6" stroke-linecap="round"/><path d="M10.6 12.1L17.1 6.6" stroke="#f0a37c" stroke-width="2.4" stroke-linecap="round"/><circle cx="11" cy="12" r="1.7" fill="#d2c040"/></svg></div></div>
<div class="row" style="top:228.50px;height:15.85px;--bg:#dbfedb"><div class="c" style="left:0px;width:83px"><span>190725-A5</span></div><div class="c" style="left:84px;width:75px"><a>190725-T5</a></div><div class="c" style="left:160px;width:461px"><span>Mart Maastikumees, 3725000001 001PUU; Nissan; Patrol; 1980</span></div><div class="c" style="left:622px;width:68px"><span>lõpetatud</span></div><div class="c" style="left:691px;width:80px"><span>Arve alusel</span></div><div class="c r" style="left:772px;width:68px"><span>158.00 €</span></div><div class="c ctr" style="left:841px;width:92px"><span>13.08.2019</span></div><div class="c ctr" style="left:934px;width:78px"><span>-</span></div><div class="c ed" style="left:1013px;width:23px"><svg class="edit" width="19" height="14" viewBox="0 0 19 14"><path d="M6.7 1.6H12.2L15.3 4.8V12.2H6.7Z" fill="#fbfbfb" stroke="#8f9290" stroke-width="1"/><path d="M12.2 1.6V4.8H15.3" fill="#d8d8d8" stroke="#9a9a9a" stroke-width="0.8"/><path d="M10.6 12.1L17.1 6.6" stroke="#c46a44" stroke-width="3.6" stroke-linecap="round"/><path d="M10.6 12.1L17.1 6.6" stroke="#f0a37c" stroke-width="2.4" stroke-linecap="round"/><circle cx="11" cy="12" r="1.7" fill="#d2c040"/></svg></div></div>
<div class="row" style="top:244.35px;height:15.85px;--bg:#dbfedb"><div class="c" style="left:0px;width:83px"><span>190725-A4</span></div><div class="c" style="left:84px;width:75px"><a>190725-T4</a></div><div class="c" style="left:160px;width:461px"><span>Margus Põlma, +37255695933 123ABC; Audi; A4; Läbisõit 432543</span></div><div class="c" style="left:622px;width:68px"><span>lõpetatud</span></div><div class="c" style="left:691px;width:80px"><span>Arve alusel</span></div><div class="c r" style="left:772px;width:68px"><span>115.20 €</span></div><div class="c ctr" style="left:841px;width:92px"><span>12.08.2019</span></div><div class="c ctr" style="left:934px;width:78px"><span>-</span></div><div class="c ed" style="left:1013px;width:23px"><svg class="edit" width="19" height="14" viewBox="0 0 19 14"><path d="M6.7 1.6H12.2L15.3 4.8V12.2H6.7Z" fill="#fbfbfb" stroke="#8f9290" stroke-width="1"/><path d="M12.2 1.6V4.8H15.3" fill="#d8d8d8" stroke="#9a9a9a" stroke-width="0.8"/><path d="M10.6 12.1L17.1 6.6" stroke="#c46a44" stroke-width="3.6" stroke-linecap="round"/><path d="M10.6 12.1L17.1 6.6" stroke="#f0a37c" stroke-width="2.4" stroke-linecap="round"/><circle cx="11" cy="12" r="1.7" fill="#d2c040"/></svg></div></div>
<div class="row" style="top:260.20px;height:15.85px;--bg:#f3f3f3"><div class="c" style="left:0px;width:83px"><span>190725-A3</span></div><div class="c" style="left:84px;width:75px"><a>190725-T3</a></div><div class="c" style="left:160px;width:461px"><span>Margus Põlma, +37255695933 123ABC; Audi; A4; Läbisõit 56655</span></div><div class="c" style="left:622px;width:68px"><span>makstud</span></div><div class="c" style="left:691px;width:80px"><span>Sularaha</span></div><div class="c r" style="left:772px;width:68px"><span>69.00 €</span></div><div class="c ctr" style="left:841px;width:92px"><span>25.07.2019</span></div><div class="c ctr" style="left:934px;width:78px"><span>-</span></div><div class="c ed" style="left:1013px;width:23px"><svg class="edit" width="19" height="14" viewBox="0 0 19 14"><path d="M6.7 1.6H12.2L15.3 4.8V12.2H6.7Z" fill="#fbfbfb" stroke="#8f9290" stroke-width="1"/><path d="M12.2 1.6V4.8H15.3" fill="#d8d8d8" stroke="#9a9a9a" stroke-width="0.8"/><path d="M10.6 12.1L17.1 6.6" stroke="#c46a44" stroke-width="3.6" stroke-linecap="round"/><path d="M10.6 12.1L17.1 6.6" stroke="#f0a37c" stroke-width="2.4" stroke-linecap="round"/><circle cx="11" cy="12" r="1.7" fill="#d2c040"/></svg></div></div>
<div class="row" style="top:276.05px;height:15.85px;--bg:#ffffff"><div class="c" style="left:0px;width:83px"><span>190725-A1</span></div><div class="c" style="left:84px;width:75px"><a>190725-T1</a></div><div class="c" style="left:160px;width:461px"><span>Margus Põlma, +37255695933 111YYY; Audi; A3; 2019; Läbisõit 6556678</span></div><div class="c" style="left:622px;width:68px"><span>Loomisel</span></div><div class="c" style="left:691px;width:80px"><span>Arve alusel</span></div><div class="c r" style="left:772px;width:68px"><span>7.92 €</span></div><div class="c ctr" style="left:841px;width:92px"><span></span></div><div class="c ctr" style="left:934px;width:78px"><span>-</span></div><div class="c ed" style="left:1013px;width:23px"><svg class="edit" width="19" height="14" viewBox="0 0 19 14"><path d="M6.7 1.6H12.2L15.3 4.8V12.2H6.7Z" fill="#fbfbfb" stroke="#8f9290" stroke-width="1"/><path d="M12.2 1.6V4.8H15.3" fill="#d8d8d8" stroke="#9a9a9a" stroke-width="0.8"/><path d="M10.6 12.1L17.1 6.6" stroke="#c46a44" stroke-width="3.6" stroke-linecap="round"/><path d="M10.6 12.1L17.1 6.6" stroke="#f0a37c" stroke-width="2.4" stroke-linecap="round"/><circle cx="11" cy="12" r="1.7" fill="#d2c040"/></svg></div></div>
<div class="row red" style="top:291.90px;height:15.85px;--bg:#dbfedb"><div class="c" style="left:0px;width:83px"><span>190723-A1</span></div><div class="c" style="left:84px;width:75px"></div><div class="c" style="left:160px;width:461px"><span>Vello, 55554444 22GGG; NISSAN; GT-R; 2017</span></div><div class="c" style="left:622px;width:68px"><span>lõpetatud</span></div><div class="c" style="left:691px;width:80px"><span>Sularaha</span></div><div class="c r" style="left:772px;width:68px"><span>315.83 €</span></div><div class="c ctr" style="left:841px;width:92px"><span>23.07.2019</span></div><div class="c ctr merit" style="left:934px;width:78px"><span>Merit</span></div><div class="c ed" style="left:1013px;width:23px"><svg class="edit" width="19" height="14" viewBox="0 0 19 14"><path d="M6.7 1.6H12.2L15.3 4.8V12.2H6.7Z" fill="#fbfbfb" stroke="#8f9290" stroke-width="1"/><path d="M12.2 1.6V4.8H15.3" fill="#d8d8d8" stroke="#9a9a9a" stroke-width="0.8"/><path d="M10.6 12.1L17.1 6.6" stroke="#c46a44" stroke-width="3.6" stroke-linecap="round"/><path d="M10.6 12.1L17.1 6.6" stroke="#f0a37c" stroke-width="2.4" stroke-linecap="round"/><circle cx="11" cy="12" r="1.7" fill="#d2c040"/></svg></div></div>
<div class="row" style="top:307.75px;height:15.85px;--bg:#ffffff"><div class="c" style="left:0px;width:83px"><span>190719-A3</span></div><div class="c" style="left:84px;width:75px"><a>190719-T4</a></div><div class="c" style="left:160px;width:461px"><span>Rando Pärna, +37256213835 831BLL; VOLKSWAGEN; PASSAT CC; 2008</span></div><div class="c" style="left:622px;width:68px"><span>Loomisel</span></div><div class="c" style="left:691px;width:80px"><span>Sularaha</span></div><div class="c r" style="left:772px;width:68px"><span>97.08 €</span></div><div class="c ctr" style="left:841px;width:92px"><span></span></div><div class="c ctr" style="left:934px;width:78px"><span>-</span></div><div class="c ed" style="left:1013px;width:23px"><svg class="edit" width="19" height="14" viewBox="0 0 19 14"><path d="M6.7 1.6H12.2L15.3 4.8V12.2H6.7Z" fill="#fbfbfb" stroke="#8f9290" stroke-width="1"/><path d="M12.2 1.6V4.8H15.3" fill="#d8d8d8" stroke="#9a9a9a" stroke-width="0.8"/><path d="M10.6 12.1L17.1 6.6" stroke="#c46a44" stroke-width="3.6" stroke-linecap="round"/><path d="M10.6 12.1L17.1 6.6" stroke="#f0a37c" stroke-width="2.4" stroke-linecap="round"/><circle cx="11" cy="12" r="1.7" fill="#d2c040"/></svg></div></div>
<div class="row" style="top:323.60px;height:15.85px;--bg:#ffffff"><div class="c" style="left:0px;width:83px"><span>190719-A2</span></div><div class="c" style="left:84px;width:75px"><a>190719-T2</a></div><div class="c" style="left:160px;width:461px"><span>Rando Pärna, +37256213835 831BLL; VOLKSWAGEN; PASSAT CC; 2008</span></div><div class="c" style="left:622px;width:68px"><span>Loomisel</span></div><div class="c" style="left:691px;width:80px"><span>Sularaha</span></div><div class="c r" style="left:772px;width:68px"><span>506.67 €</span></div><div class="c ctr" style="left:841px;width:92px"><span></span></div><div class="c ctr" style="left:934px;width:78px"><span>-</span></div><div class="c ed" style="left:1013px;width:23px"><svg class="edit" width="19" height="14" viewBox="0 0 19 14"><path d="M6.7 1.6H12.2L15.3 4.8V12.2H6.7Z" fill="#fbfbfb" stroke="#8f9290" stroke-width="1"/><path d="M12.2 1.6V4.8H15.3" fill="#d8d8d8" stroke="#9a9a9a" stroke-width="0.8"/><path d="M10.6 12.1L17.1 6.6" stroke="#c46a44" stroke-width="3.6" stroke-linecap="round"/><path d="M10.6 12.1L17.1 6.6" stroke="#f0a37c" stroke-width="2.4" stroke-linecap="round"/><circle cx="11" cy="12" r="1.7" fill="#d2c040"/></svg></div></div>
<div class="row" style="top:339.45px;height:15.85px;--bg:#ffffff"><div class="c" style="left:0px;width:83px"><span>190719-A1-K</span></div><div class="c" style="left:84px;width:75px"></div><div class="c" style="left:160px;width:461px"><span>Kenno Kink, 5104024 TORK09; BMW; 730D; 2010</span></div><div class="c" style="left:622px;width:68px"><span>Loomisel</span></div><div class="c" style="left:691px;width:80px"><span>Arve alusel</span></div><div class="c r" style="left:772px;width:68px"><span>-55.00 €</span></div><div class="c ctr" style="left:841px;width:92px"><span>05.08.2019</span></div><div class="c ctr" style="left:934px;width:78px"><span>-</span></div><div class="c ed" style="left:1013px;width:23px"><svg class="edit" width="19" height="14" viewBox="0 0 19 14"><path d="M6.7 1.6H12.2L15.3 4.8V12.2H6.7Z" fill="#fbfbfb" stroke="#8f9290" stroke-width="1"/><path d="M12.2 1.6V4.8H15.3" fill="#d8d8d8" stroke="#9a9a9a" stroke-width="0.8"/><path d="M10.6 12.1L17.1 6.6" stroke="#c46a44" stroke-width="3.6" stroke-linecap="round"/><path d="M10.6 12.1L17.1 6.6" stroke="#f0a37c" stroke-width="2.4" stroke-linecap="round"/><circle cx="11" cy="12" r="1.7" fill="#d2c040"/></svg></div></div>
<div class="row" style="top:355.30px;height:15.85px;--bg:#ffffff"><div class="c" style="left:0px;width:83px"><span>190719-A1</span></div><div class="c" style="left:84px;width:75px"><a>190719-T1</a></div><div class="c" style="left:160px;width:461px"><span>Kenno Kink, 5104024 TORK09; BMW; 730D; 2010</span></div><div class="c" style="left:622px;width:68px"><span>Loomisel</span></div><div class="c" style="left:691px;width:80px"><span>Arve alusel</span></div><div class="c r" style="left:772px;width:68px"><span>55.00 €</span></div><div class="c ctr" style="left:841px;width:92px"><span></span></div><div class="c ctr" style="left:934px;width:78px"><span>-</span></div><div class="c ed" style="left:1013px;width:23px"><svg class="edit" width="19" height="14" viewBox="0 0 19 14"><path d="M6.7 1.6H12.2L15.3 4.8V12.2H6.7Z" fill="#fbfbfb" stroke="#8f9290" stroke-width="1"/><path d="M12.2 1.6V4.8H15.3" fill="#d8d8d8" stroke="#9a9a9a" stroke-width="0.8"/><path d="M10.6 12.1L17.1 6.6" stroke="#c46a44" stroke-width="3.6" stroke-linecap="round"/><path d="M10.6 12.1L17.1 6.6" stroke="#f0a37c" stroke-width="2.4" stroke-linecap="round"/><circle cx="11" cy="12" r="1.7" fill="#d2c040"/></svg></div></div>
<div class="row red" style="top:371.15px;height:15.85px;--bg:#dbfedb"><div class="c" style="left:0px;width:83px"><span>190718-A1</span></div><div class="c" style="left:84px;width:75px"></div><div class="c" style="left:160px;width:461px"><span>Laura-Liis Pärna, 56213835 235ALU; ROVER; 216; 1992</span></div><div class="c" style="left:622px;width:68px"><span>lõpetatud</span></div><div class="c" style="left:691px;width:80px"><span>Arve alusel</span></div><div class="c r" style="left:772px;width:68px"><span>668 220.00 €</span></div><div class="c ctr" style="left:841px;width:92px"><span>26.07.2019</span></div><div class="c ctr merit" style="left:934px;width:78px"><span>Merit</span></div><div class="c ed" style="left:1013px;width:23px"><svg class="edit" width="19" height="14" viewBox="0 0 19 14"><path d="M6.7 1.6H12.2L15.3 4.8V12.2H6.7Z" fill="#fbfbfb" stroke="#8f9290" stroke-width="1"/><path d="M12.2 1.6V4.8H15.3" fill="#d8d8d8" stroke="#9a9a9a" stroke-width="0.8"/><path d="M10.6 12.1L17.1 6.6" stroke="#c46a44" stroke-width="3.6" stroke-linecap="round"/><path d="M10.6 12.1L17.1 6.6" stroke="#f0a37c" stroke-width="2.4" stroke-linecap="round"/><circle cx="11" cy="12" r="1.7" fill="#d2c040"/></svg></div></div>
<div class="row" style="top:387.00px;height:15.85px;--bg:#ffffff"><div class="c" style="left:0px;width:83px"><span>190717-A9</span></div><div class="c" style="left:84px;width:75px"><a>190717-T6</a></div><div class="c" style="left:160px;width:461px"><span>Kenno Kink, 5104024 675MHT; AUDI; A1 SPORTBACK; 2012</span></div><div class="c" style="left:622px;width:68px"><span>Loomisel</span></div><div class="c" style="left:691px;width:80px"><span>Arve alusel</span></div><div class="c r" style="left:772px;width:68px"><span>55.38 €</span></div><div class="c ctr" style="left:841px;width:92px"><span></span></div><div class="c ctr" style="left:934px;width:78px"><span>-</span></div><div class="c ed" style="left:1013px;width:23px"><svg class="edit" width="19" height="14" viewBox="0 0 19 14"><path d="M6.7 1.6H12.2L15.3 4.8V12.2H6.7Z" fill="#fbfbfb" stroke="#8f9290" stroke-width="1"/><path d="M12.2 1.6V4.8H15.3" fill="#d8d8d8" stroke="#9a9a9a" stroke-width="0.8"/><path d="M10.6 12.1L17.1 6.6" stroke="#c46a44" stroke-width="3.6" stroke-linecap="round"/><path d="M10.6 12.1L17.1 6.6" stroke="#f0a37c" stroke-width="2.4" stroke-linecap="round"/><circle cx="11" cy="12" r="1.7" fill="#d2c040"/></svg></div></div>
<div class="row" style="top:402.85px;height:15.85px;--bg:#f3f3f3"><div class="c" style="left:0px;width:83px"><span>190717-A8</span></div><div class="c" style="left:84px;width:75px"><a>190717-T5</a></div><div class="c" style="left:160px;width:461px"><span>Rando Pärna, +37256213835 831BLL; VOLKSWAGEN; PASSAT CC; 2008; Läbisõit 66666</span></div><div class="c" style="left:622px;width:68px"><span>makstud</span></div><div class="c" style="left:691px;width:80px"><span>Sularaha</span></div><div class="c r" style="left:772px;width:68px"><span>0.00 €</span></div><div class="c ctr" style="left:841px;width:92px"><span>17.07.2019</span></div><div class="c ctr" style="left:934px;width:78px"><span>-</span></div><div class="c ed" style="left:1013px;width:23px"><svg class="edit" width="19" height="14" viewBox="0 0 19 14"><path d="M6.7 1.6H12.2L15.3 4.8V12.2H6.7Z" fill="#fbfbfb" stroke="#8f9290" stroke-width="1"/><path d="M12.2 1.6V4.8H15.3" fill="#d8d8d8" stroke="#9a9a9a" stroke-width="0.8"/><path d="M10.6 12.1L17.1 6.6" stroke="#c46a44" stroke-width="3.6" stroke-linecap="round"/><path d="M10.6 12.1L17.1 6.6" stroke="#f0a37c" stroke-width="2.4" stroke-linecap="round"/><circle cx="11" cy="12" r="1.7" fill="#d2c040"/></svg></div></div>
</div>

<svg class="abs" style="left:0;top:0" width="1200" height="675" viewBox="0 0 1200 675">
  <ellipse cx="222.3" cy="216.4" rx="70.1" ry="35.2" fill="none" stroke="#0a5ae8" stroke-width="4"/>
</svg>
</div>
</body></html>
